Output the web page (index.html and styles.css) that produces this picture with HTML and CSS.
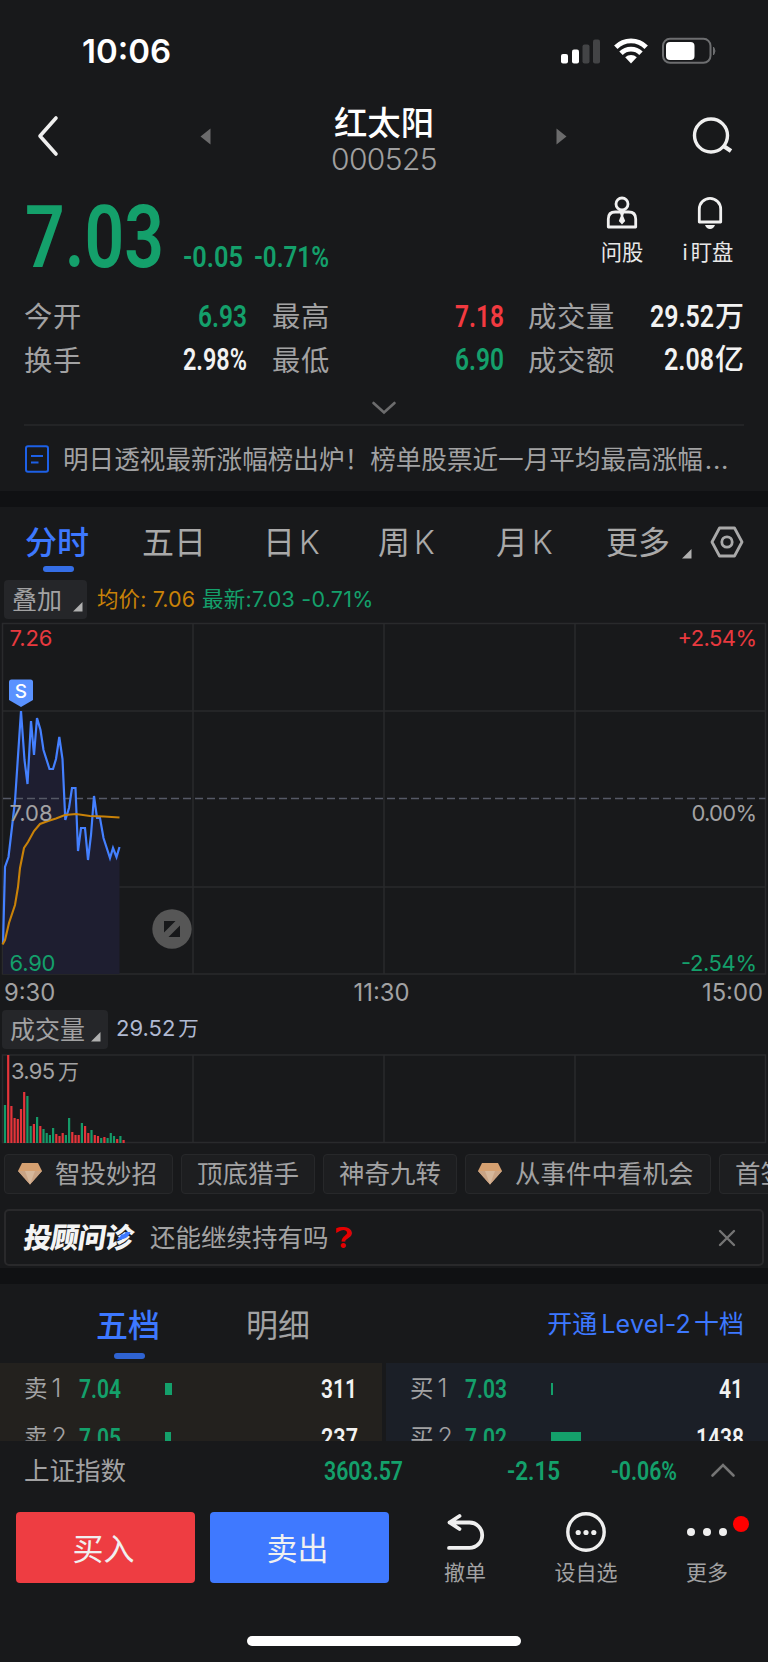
FILE: index.html
```html
<!DOCTYPE html>
<html lang="zh-CN">
<head>
<meta charset="utf-8">
<title>红太阳 000525</title>
<link rel="stylesheet" href="styles.css">
</head>
<body>
<main class="screen">
  <div class="status">
    <span class="clock">10:06</span>
    <svg class="status-icons" width="160" height="30" viewBox="0 0 160 30">
      <rect x="1" y="18" width="7" height="9.500" rx="2" fill="#fff"/>
      <rect x="12" y="13.500" width="7" height="14" rx="2" fill="#fff"/>
      <rect x="22.500" y="8.500" width="7" height="19" rx="2" fill="#434446"/>
      <rect x="33" y="3.500" width="7" height="24" rx="2" fill="#434446"/>
      <g fill="none" stroke="#fff" stroke-width="4.800">
        <path d="M55.800 11.200a21.500 21.500 0 0 1 30.400 0"/>
        <path d="M61 17.300a14 14 0 0 1 20 0"/>
      </g>
      <path d="M65.200 21.300a8.600 8.600 0 0 1 11.600 0L71 27.500z" fill="#fff"/>
      <rect x="103" y="2.800" width="47.500" height="24" rx="7" fill="none" stroke="#6d6e70" stroke-width="2"/>
      <rect x="106" y="6" width="28.500" height="18" rx="4" fill="#fff"/>
      <path d="M153.500 11q3 4 0 8z" fill="#6d6e70" stroke="#6d6e70"/>
    </svg>
  </div>

  <header class="head">
    <svg class="back" width="24" height="42" viewBox="0 0 24 42"><path d="M20 3L4 21l16 18" fill="none" stroke="#efefef" stroke-width="3.600" stroke-linecap="round" stroke-linejoin="round"/></svg>
    <svg width="11" height="17" viewBox="0 0 11 17"><path d="M10.500.5v16L.5 8.500z" fill="#6b6b6c"/></svg>
    <div class="title"><h1>红太阳</h1><p>000525</p></div>
    <svg width="11" height="17" viewBox="0 0 11 17"><path d="M.5.500v16l10-8z" fill="#6b6b6c"/></svg>
    <svg class="search" width="42" height="42" viewBox="0 0 42 42"><g fill="none" stroke="#efefef" stroke-width="3.400"><circle cx="19" cy="20.500" r="16.500"/><path d="M31.500 31l7.500 5" stroke-width="4.200"/></g></svg>
  </header>

  <section class="quote">
    <div class="price-row">
      <svg class="num down" width="135" height="62"><text x="-1" y="61" font-size="87" textLength="139" lengthAdjust="spacingAndGlyphs">7.03</text></svg>
      <svg class="num down chg" width="60" height="22"><text x="0" y="21" font-size="30" textLength="60" lengthAdjust="spacingAndGlyphs">-0.05</text></svg>
      <svg class="num down pct" width="75" height="22"><text x="-1" y="21" font-size="30" textLength="75" lengthAdjust="spacingAndGlyphs">-0.71%</text></svg>
      <div class="tool ask">
        <svg width="32" height="34" viewBox="0 0 32 34"><g fill="none" stroke="#f0f0f0" stroke-width="2.800"><circle cx="16" cy="8" r="6"/><path d="M2.300 31V23q0-7 7-7h13.400q7 0 7 7v8z" stroke-linejoin="round"/></g><path d="M14 17h4l-.8 3 2 5-3.200 3.500-3.200-3.500 2-5z" fill="#f0f0f0"/></svg>
        <span>问股</span>
      </div>
      <div class="tool watch">
        <svg width="32" height="34" viewBox="0 0 32 34"><path d="M5.300 26V13a10.700 10.700 0 0 1 21.400 0v13z" fill="none" stroke="#f0f0f0" stroke-width="2.800" stroke-linejoin="round"/><path d="M11 29h10q-1.500 4-5 4t-5-4z" fill="#f0f0f0"/></svg>
        <span><i>i</i>盯盘</span>
      </div>
    </div>
    <div class="stats">
      <span>今开</span><svg class="num down" width="49" height="22"><text y="22" font-size="30.500" textLength="49" lengthAdjust="spacingAndGlyphs">6.93</text></svg>
      <span>最高</span><svg class="num up" width="49" height="22"><text y="22" font-size="30.500" textLength="49" lengthAdjust="spacingAndGlyphs">7.18</text></svg>
      <span>成交量</span><b><svg class="num" width="64" height="22"><text y="22" font-size="30.500" textLength="64" lengthAdjust="spacingAndGlyphs">29.52</text></svg><em>万</em></b>
      <span>换手</span><svg class="num" width="64" height="22"><text y="22" font-size="30.500" textLength="64" lengthAdjust="spacingAndGlyphs">2.98%</text></svg>
      <span>最低</span><svg class="num down" width="49" height="22"><text y="22" font-size="30.500" textLength="49" lengthAdjust="spacingAndGlyphs">6.90</text></svg>
      <span>成交额</span><b><svg class="num" width="50" height="22"><text y="22" font-size="30.500" textLength="50" lengthAdjust="spacingAndGlyphs">2.08</text></svg><em>亿</em></b>
    </div>
    <svg class="expand" width="26" height="14" viewBox="0 0 26 14"><path d="M2.500 2L13 11.500 23.500 2" fill="none" stroke="#6c6c6d" stroke-width="2.600" stroke-linecap="round"/></svg>
  </section>

  <div class="news">
    <svg width="24" height="28" viewBox="0 0 24 28"><g fill="none" stroke="#1d60e6" stroke-width="2"><rect x="1" y="1.200" width="22" height="25.600" rx="2"/><path d="M6 11h12M6 17.500h7.500"/></g></svg>
    <span>明日透视最新涨幅榜出炉！榜单股票近一月平均最高涨幅<i>...</i></span>
  </div>
  <div class="strip"></div>

  <nav class="periods">
    <a class="on">分时</a><a>五日</a><a>日<i>K</i></a><a>周<i>K</i></a><a>月<i>K</i></a><a>更多</a>
    <svg class="corner" width="10" height="10"><path d="M9.500 0v9.500H0z" fill="#b0b0b0"/></svg>
    <svg class="hex" width="34" height="32" viewBox="0 0 34 32"><g fill="none" stroke="#a9a9a9" stroke-width="2.800"><path d="M9.500 2h15L32 16l-7.500 14h-15L2 16z" stroke-linejoin="round"/><circle cx="17" cy="16" r="5.200"/></g></svg>
  </nav>

  <div class="legend">
    <button class="pick">叠加<svg width="10" height="10"><path d="M9.500 0v9.500H0z" fill="#b0b0b0"/></svg></button>
    <span class="avg">均价: 7.06</span><span class="last">最新:7.03 -0.71%</span>
  </div>

  <svg class="chart" width="768" height="353" viewBox="0 622 768 353">
    <g fill="none" stroke="#292a2c" stroke-width="1.500">
      <path d="M2.500 623.500H765.500V974H2.500zM2.500 711H765.500M2.500 887H765.500M193 623.500V974M384 623.500V974M575 623.500V974"/>
    </g>
    <path d="M3 944L5 867 8.500 857 12 827 15 801 21 711 24.500 760 27.500 786 31 721 34 757 37 718 40.500 730 43.500 750 49.500 769H53L56 759 59.300 737 62.500 759 65.300 820 69 808 72 788H75.500L78 853 81 828H85L88 862 91 835 94 794 97 818H100L103.500 838 110 858 113 847 116.500 858 119.500 847V974H3z" fill="#1e1e30"/>
    <path d="M3 798.500H765.500" stroke="#555966" stroke-width="1.700" stroke-dasharray="8 4"/>
    <path d="M3 944L5 867 8.500 857 12 827 15 801 21 711 24.500 760 27.500 784 31 721 34 755 37 718 40.500 730 43.500 750 49.500 769H53L56 759 59.300 737 62.500 759 65.300 820 69 808 72 788H75.500L78 851 81 828H85L88 860 91 835 94 796 97 818H100L103.500 838 110 858 113 848 116.500 857 119.500 847" fill="none" stroke="#4480ff" stroke-width="2.200"/>
    <path d="M2.500 944.500L5 940 9 923 15 905 18 887 20 868 24 848 28 842 34 831 40 824 48 821 56 818.500 65 815 76 814 90 816 104 816.500 119.500 817.500" fill="none" stroke="#c98208" stroke-width="2.100"/>
    <path d="M11.500 679.500h19q2.500 0 2.500 2.500V700L21 707 9 700V682q0-2.500 2.500-2.500z" fill="#5a92ff"/>
    <text x="21" y="697.500" text-anchor="middle" class="sell">S</text>
    <g class="axis">
      <text x="9.500" y="646" class="up" textLength="43">7.26</text>
      <text x="677.500" y="646" class="up" textLength="79.500">+2.54%</text>
      <text x="9.500" y="821" textLength="43">7.08</text>
      <text x="691.500" y="821" textLength="65.500">0.00%</text>
      <text x="9.500" y="971" class="down" textLength="46">6.90</text>
      <text x="681" y="971" class="down" textLength="76">-2.54%</text>
    </g>
    <circle cx="172" cy="929" r="19.700" fill="#565656"/>
    <path d="M164 921h11.500L164 932.500zM180 925.500V937H168.500z" fill="#17181a"/>
  </svg>
  <div class="times"><span>9:30</span><span>11:30</span><span>15:00</span></div>

  <div class="legend vol-legend">
    <button class="pick">成交量<svg width="10" height="10"><path d="M9.500 0v9.500H0z" fill="#b0b0b0"/></svg></button>
    <span class="total">29.52<em>万</em></span>
  </div>
  <svg class="chart" width="768" height="90" viewBox="0 1054 768 90">
    <path d="M2.500 1055H765.500V1142.500H2.500zM193 1055V1142.500M384 1055V1142.500M575 1055V1142.500" fill="none" stroke="#292a2c" stroke-width="1.500"/>
    <g fill="none" stroke-width="2.200">
      <path stroke="#e5343a" d="M8.200 1143V1055M11.400 1143V1106M14.600 1143V1118M17.800 1143V1119M21 1143V1109M24.200 1143V1092M33.900 1143V1124M40.300 1143V1126M56.300 1143V1134M59.500 1143V1136M62.700 1143V1133M72.300 1143V1132M75.500 1143V1135M78.700 1143V1135M85.100 1143V1126M88.300 1143V1133M94.800 1143V1135M98 1143V1136M104.400 1143V1137M117.200 1143V1139M123.600 1143V1140"/>
      <path stroke="#159a68" d="M5 1143V1105M27.400 1143V1096M30.700 1143V1126M37.100 1143V1117M43.500 1143V1129M46.700 1143V1133M49.900 1143V1135M53.100 1143V1128M65.900 1143V1135M69.100 1143V1118M81.900 1143V1123M91.500 1143V1130M101.200 1143V1138M107.600 1143V1138M110.800 1143V1133M114 1143V1136M120.400 1143V1136"/>
    </g>
    <text x="11" y="1079" class="peak" textLength="44">3.95</text><text x="58" y="1079" class="peak cn">万</text>
  </svg>

  <div class="chips">
    <a><svg width="24" height="22" viewBox="0 0 24 22"><path d="M4 0h16l4 8-12 13.500L0 8z" fill="#d5a070"/><path d="M0 8h24L12 21.500z" fill="#c9a384"/><path d="M7 8h10l-5 13.500z" fill="#d6b79b"/></svg>智投妙招</a>
    <a>顶底猎手</a>
    <a>神奇九转</a>
    <a class="wide"><svg width="24" height="22" viewBox="0 0 24 22"><path d="M4 0h16l4 8-12 13.500L0 8z" fill="#d5a070"/><path d="M0 8h24L12 21.500z" fill="#c9a384"/><path d="M7 8h10l-5 13.500z" fill="#d6b79b"/></svg>从事件中看机会</a>
    <a>首签</a>
  </div>

  <div class="banner">
    <strong>投顾问诊<svg width="13" height="9" viewBox="0 0 15 11"><path d="M4 2.500Q8 4 9 0h6q-2 8-8 8.500Q3 10 0 10q0-3 3-4z" fill="#3d78ff"/></svg></strong>
    <span>还能继续持有吗</span><span class="q">❓&#xFE0E;</span>
    <svg class="close" width="18" height="18" viewBox="0 0 18 18"><path d="M2 2l14 14M16 2L2 16" stroke="#747474" stroke-width="2.400" stroke-linecap="round"/></svg>
  </div>
  <div class="strip second"></div>

  <div class="book-tabs"><a class="on">五档</a><a>明细</a><span>开通<i>Level-2</i>十档</span></div>
  <div class="book">
    <div class="side ask-side">
      <div class="lvl"><span>卖<i>1</i></span><svg class="num down" width="42" height="19"><text y="19" font-size="26" textLength="42" lengthAdjust="spacingAndGlyphs">7.04</text></svg><div class="bar"><div style="width:7px"></div></div><svg class="num" width="37" height="19"><text y="19" font-size="26" textLength="36" lengthAdjust="spacingAndGlyphs">311</text></svg></div>
      <div class="lvl"><span>卖<i>2</i></span><svg class="num down" width="42" height="19"><text y="19" font-size="26" textLength="42" lengthAdjust="spacingAndGlyphs">7.05</text></svg><div class="bar"><div style="width:6px"></div></div><svg class="num" width="37" height="19"><text y="19" font-size="26" textLength="37" lengthAdjust="spacingAndGlyphs">237</text></svg></div>
    </div>
    <div class="side bid-side">
      <div class="lvl"><span>买<i>1</i></span><svg class="num down" width="42" height="19"><text y="19" font-size="26" textLength="42" lengthAdjust="spacingAndGlyphs">7.03</text></svg><div class="bar"><div style="width:2px"></div></div><svg class="num" width="25" height="19"><text y="19" font-size="26" textLength="24" lengthAdjust="spacingAndGlyphs">41</text></svg></div>
      <div class="lvl"><span>买<i>2</i></span><svg class="num down" width="42" height="19"><text y="19" font-size="26" textLength="42" lengthAdjust="spacingAndGlyphs">7.02</text></svg><div class="bar"><div style="width:30px"></div></div><svg class="num" width="48" height="19"><text y="19" font-size="26" textLength="48" lengthAdjust="spacingAndGlyphs">1438</text></svg></div>
    </div>
  </div>

  <div class="index">
    <span>上证指数</span>
    <svg class="num down" width="79" height="19"><text y="19" font-size="26" textLength="79" lengthAdjust="spacingAndGlyphs">3603.57</text></svg>
    <svg class="num down" width="53" height="19"><text y="19" font-size="26" textLength="53" lengthAdjust="spacingAndGlyphs">-2.15</text></svg>
    <svg class="num down" width="66" height="19"><text y="19" font-size="26" textLength="66" lengthAdjust="spacingAndGlyphs">-0.06%</text></svg>
    <svg width="26" height="16" viewBox="0 0 26 16"><path d="M2.500 12.500L13 2 23.500 12.500" fill="none" stroke="#757575" stroke-width="2.600" stroke-linecap="round"/></svg>
  </div>

  <footer class="actions">
    <button class="buy">买入</button>
    <button class="sellbtn">卖出</button>
    <div class="act"><svg width="40" height="40" viewBox="0 0 40 40"><path d="M14.500 4L4.500 10.500l10 6.500M4.500 10.500h20a12.700 12.700 0 0 1 0 25.400H4" fill="none" stroke="#efefef" stroke-width="3.800" stroke-linecap="round" stroke-linejoin="round"/></svg><span>撤单</span></div>
    <div class="act"><svg width="40" height="40" viewBox="0 0 40 40"><circle cx="20" cy="20" r="18.200" fill="none" stroke="#efefef" stroke-width="3.400"/><g fill="#efefef"><circle cx="12.200" cy="20.500" r="2.600"/><circle cx="20" cy="20.500" r="2.600"/><circle cx="27.800" cy="20.500" r="2.600"/></g></svg><span>设自选</span></div>
    <div class="act"><svg width="40" height="40" viewBox="0 0 40 40"><g fill="#efefef"><circle cx="4" cy="20" r="4"/><circle cx="20" cy="20" r="4"/><circle cx="36" cy="20" r="4"/></g></svg><span>更多</span><em class="dot"></em></div>
  </footer>
  <div class="home"></div>
</main>
</body>
</html>
```

FILE: styles.css
```css
* { box-sizing: border-box; }
html { background: #fff; }
body {
  margin: 0;
  width: 768px;
  font-family: Inter, "Noto Sans CJK SC", sans-serif;
  color: #a2a2a3;
}
svg { display: block; flex: none; overflow: visible; }
i, em { font-style: normal; }
h1, p { margin: 0; }
button { border: 0; padding: 0; font: inherit; color: inherit; flex: none; }
.screen { width: 768px; height: 1662px; overflow: hidden; background: #18191b; }

.num { fill: #f2f2f2; font-family: Roboto, sans-serif; font-weight: 600; }
.num.down { fill: #14a06b; }
.num.up { fill: #f23a40; }

.status { height: 90px; padding: 36px 48px 0 82px; display: flex; justify-content: space-between; align-items: flex-start; }
.clock { font-size: 33px; line-height: 31px; font-weight: 600; color: #fff; letter-spacing: 0; }

.head { height: 100px; padding: 0 34px 0 36px; display: grid; grid-template-columns: 164px 11px 1fr 11px 125px 42px; align-items: center; }
.head > svg { margin-bottom: 8px; }
.head .search { grid-column: 6; }
.title { text-align: center; padding-left: 1px; }
.title h1 { font-size: 33.400px; font-weight: 500; line-height: 40px; color: #fff; margin-top: -1px; }
.title p { font-size: 30px; font-weight: 300; line-height: 33px; color: #a0a0a0; letter-spacing: -.6px; }

.quote { height: 236px; margin: 0 24px; border-bottom: 2px solid #232426; }
.price-row { height: 104px; display: flex; padding: 16px 7px 0 2px; }
.price-row .chg { margin: 40px 0 0 22px; }
.price-row .pct { margin: 40px 0 0 12px; }
.tool { display: flex; flex-direction: column; align-items: center; margin-top: -10px; color: #e8e8e8; font-size: 21.300px; line-height: 30px; white-space: nowrap; }
.tool span { margin-top: 7px; }
.tool i { margin-right: 3px; }
.ask { width: 44px; margin-left: 270px; }
.watch { width: 54px; margin-left: 39px; }
.watch span { margin-left: -4px; }
.stats { display: grid; grid-template-columns: 104px 119px 104px 153px 112px 128px; grid-auto-rows: 43.500px; align-items: center; }
.stats > svg, .stats > b { justify-self: end; }
.stats > span { font-size: 28.300px; letter-spacing: .7px; line-height: 40px; padding-top: 3px; white-space: nowrap; }
.stats > span:nth-child(3), .stats > span:nth-child(9) { padding-left: 25px; }
.stats > span:nth-child(5), .stats > span:nth-child(11) { padding-left: 24px; }
.stats b { display: flex; align-items: center; font-weight: 500; color: #f2f2f2; font-size: 29px; line-height: 40px; gap: 1px; }
.stats em { padding-top: 2px; }
.expand { margin: 20px auto 0; }

.news { height: 65px; padding: 2px 24px 0 25px; display: flex; align-items: center; gap: 14px; font-size: 25.600px; white-space: nowrap; line-height: 36px; }
.news svg { margin-bottom: 2px; }
.news i { letter-spacing: .7px; margin-left: 2px; }
.strip { height: 16px; background: #101113; }

.periods { height: 73px; display: grid; grid-template-columns: 117px 121px 115px 118px 110px 75px 28px 33px; padding: 17px 0 0 25px; font-size: 32px; line-height: 38px; align-items: start; }
.periods a { color: #a9a9a9; white-space: nowrap; }
.periods i { margin-left: 4px; font-weight: 300; font-size: 32px; line-height: 30px; }
.on { position: relative; }
.periods .on, .book-tabs .on { color: #3d78ff; font-weight: 500; }
.on::after { content: ""; display: block; width: 31px; height: 6px; border-radius: 3px; background: #356ee6; margin: 4px 0 0 18px; }
.corner { margin: 25px 0 0 1px; }
.hex { margin: 2px 0 0 1px; }

.legend { height: 42px; padding-left: 4px; display: flex; align-items: flex-start; font-size: 21.500px; line-height: 38px; white-space: nowrap; }
.pick { height: 39px; width: 83px; border-radius: 4px; background: #252629; display: flex; align-items: center; justify-content: space-between; padding: 0 4px 0 8px; font-size: 25px; letter-spacing: -.1px; }
.pick svg { margin-top: 15px; }
.avg { color: #c98208; margin-left: 10px; letter-spacing: .1px; }
.last { color: #14a06b; margin-left: 7px; letter-spacing: .25px; }
.chart { width: 768px; }
.sell { font: 500 19px Inter, sans-serif; fill: #fff; }
.axis, .peak { font-family: Inter, sans-serif; font-size: 22px; fill: #a2a2a3; }
.peak.cn { font-family: "Noto Sans CJK SC", sans-serif; font-size: 21px; }
.axis .up { fill: #e8393f; }
.axis .down { fill: #14a06b; }
.times { height: 35px; padding: 0 5px 0 4px; display: grid; grid-template-columns: 1fr 1fr 1fr; font-size: 23.800px; line-height: 36px; }
.times span:nth-child(2) { text-align: center; margin-left: -4px; }
.times span:nth-child(3) { text-align: right; }
.vol-legend { height: 44px; padding-left: 2px; }
.vol-legend .pick { width: 106px; padding: 0 7px 0 8px; font-size: 25px; letter-spacing: 0; }
.total { color: #b0b9d2; margin-left: 8px; font-size: 22px; line-height: 37px; }
.total em { margin-left: 3px; font-size: 20.500px; }

.chips { height: 65px; padding: 10px 0 0 4px; display: flex; gap: 8px; overflow: hidden; }
.chips a { flex: none; height: 40px; padding: 0 15px; border: 1px solid #27282a; border-radius: 4px; background: #1d1e20; font-size: 25.500px; line-height: 38px; display: flex; align-items: center; white-space: nowrap; width: 134px; }
.chips a:first-child { width: 169px; padding-left: 13px; }
.chips .wide { width: 246px; padding-left: 12px; }
.chips svg { margin: 0 13px 1px 0; }

.banner { height: 57px; margin: 0 4px; border: 2px solid #29292b; border-radius: 5px; padding: 0 26px 0 18px; display: flex; align-items: center; font-size: 25.500px; line-height: 36px; }
.banner strong { position: relative; width: 109px; font-size: 28px; font-weight: 900; color: #f4f4f4; transform: skewX(-9deg); letter-spacing: -.8px; white-space: nowrap; }
.banner strong svg { position: absolute; right: 3px; top: 12px; }
.banner span { margin-left: 17px; white-space: nowrap; }
.banner .q { margin-left: 6px; color: #e60000; font-family: "DejaVu Sans", sans-serif; font-size: 29px; }
.close { margin-left: auto; }
.strip.second { margin-top: 2px; }

.book-tabs { height: 79px; padding: 21px 24px 0 96px; display: grid; grid-template-columns: 150px 150px 1fr; font-size: 32px; line-height: 42px; }
.book-tabs .on::after { margin-top: 6px; margin-left: 18px; background: #2f63d2; }
.book-tabs span { justify-self: end; color: #3d78ff; font-size: 25px; white-space: nowrap; line-height: 38px; }
.book-tabs i { margin: 0 3px 0 4px; font-size: 25px; letter-spacing: .2px; }
.book { height: 78px; overflow: hidden; display: grid; grid-template-columns: 382px 382px; gap: 4px; }
.side { padding: 1px 24px 0 24px; background: #23211e; }
.bid-side { background: #1b1f27; }
.lvl { height: 49px; display: grid; grid-template-columns: 55px 86px 1fr auto; align-items: center; font-size: 23.500px; line-height: 48px; }
.lvl i { margin-left: 4px; font-size: 25px; font-weight: 300; }
.bar div { height: 12px; background: #14a06b; }

.index { height: 59px; padding: 0 32px 0 24px; display: grid; grid-template-columns: 300px 183px 104px 1fr 26px; align-items: center; font-size: 25.500px; line-height: 36px; }
.actions { height: 135px; padding: 12px 0 0 16px; display: flex; align-items: flex-start; }
.actions button { width: 179px; height: 71px; border-radius: 4px; font-size: 31px; color: #f0f0f0; padding: 0 4px 3px 0; }
.buy { background: #ee3d42; margin-right: 15px; }
.sellbtn { background: #3f79ff; }
.act { flex: none; position: relative; width: 121px; display: flex; flex-direction: column; align-items: center; font-size: 21px; line-height: 28px; }
.act span { margin-top: 7px; }
.act:nth-child(3) { margin-left: 15.500px; }
.dot { position: absolute; width: 16px; height: 16px; border-radius: 50%; background: #f00; left: 86px; top: 4px; }
.home { width: 274px; height: 10px; border-radius: 5px; background: #fff; margin: 1px auto 0; }
```
